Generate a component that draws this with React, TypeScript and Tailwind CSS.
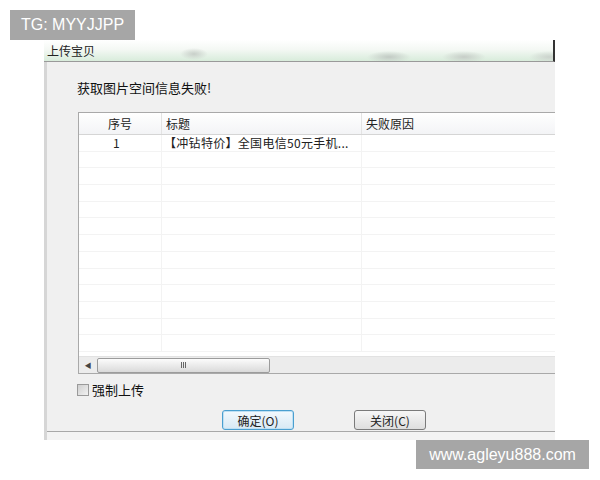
const font = { fontFamily: '"Noto Sans CJK SC", "Noto Sans", sans-serif' };

function Row({ idx, title }: { idx?: string; title?: string }) {
  return (
    <div className="flex h-[16.7px] border-b border-[#f3f3f3] text-[12px] leading-[16px] text-[#222]">
      <div className="w-[82px] shrink-0 pl-[34px]">{idx}</div>
      <div className="w-[200px] shrink-0 border-l border-[#f3f3f3] pl-[2px] whitespace-nowrap tracking-[0.3px]">{title}</div>
      <div className="flex-1 border-l border-[#f3f3f3]" />
    </div>
  );
}

export default function App() {
  const empty = Array.from({ length: 12 });
  return (
    <div className="relative h-[480px] w-[600px] overflow-hidden bg-white" style={font}>
      <div className="ml-[44px] mt-[40px] flex h-[400px] w-[511px] flex-col">
        {/* title bar */}
        <div className="flex h-[22px] shrink-0 items-center border-b border-r-2 border-b-[#9a9a9a] border-r-[#333] bg-[radial-gradient(ellipse_14px_6px_at_150px_14px,#c8cfc9,transparent),radial-gradient(ellipse_22px_6px_at_345px_17px,#c2cac4,transparent),radial-gradient(ellipse_22px_6px_at_420px_17px,#c6cdc7,transparent),radial-gradient(ellipse_20px_6px_at_505px_17px,#ccd3cd,transparent),linear-gradient(to_bottom,#ffffff_0%,#f4f8f4_45%,#d8ecdb_100%)] pl-[3px] text-[12px] text-[#222]">
          上传宝贝
        </div>

        {/* body */}
        <div className="flex flex-1 flex-col border-l-[3px] border-[#d6d6d6] bg-[#f0f0f0]">
          <div className="pl-[30px] pt-[16px] text-[13px] leading-[20px] text-[#111]">获取图片空间信息失败!</div>

          {/* list view */}
          <div className="ml-[31px] mt-[14px] flex h-[262px] flex-col border border-r-0 border-[#a9a9a9] bg-white">
            <div className="flex h-[22px] shrink-0 border-b border-[#d5d5d5] bg-[linear-gradient(to_bottom,#ffffff,#f3f4f6)] text-[12px] leading-[21px] text-[#222]">
              <div className="w-[82px] shrink-0 text-center">序号</div>
              <div className="w-[200px] shrink-0 border-l border-[#e3e3e3] pl-[4px]">标题</div>
              <div className="flex-1 border-l border-[#e3e3e3] pl-[4px]">失败原因</div>
            </div>
            <div className="flex-1 overflow-hidden">
              <Row idx="1" title="【冲钻特价】全国电信50元手机..." />
              {empty.map((_, i) => (
                <Row key={i} />
              ))}
            </div>
            {/* horizontal scrollbar */}
            <div className="flex h-[17px] shrink-0 items-center border-t border-[#e2e2e2] bg-[#ececec]">
              <div className="flex w-[18px] justify-center text-[7px] text-[#444]">◀</div>
              <div className="flex h-[15px] w-[173px] items-center justify-center gap-[1px] rounded-[2px] border border-[#9c9c9c] bg-[linear-gradient(to_bottom,#fbfbfb,#dadada)]">
                <span className="h-[6px] w-[1px] bg-[#666]" />
                <span className="h-[6px] w-[1px] bg-[#666]" />
                <span className="h-[6px] w-[1px] bg-[#666]" />
              </div>
            </div>
          </div>

          <label className="ml-[30px] mt-[8px] flex items-center gap-[3px] text-[13px] leading-[16px] text-[#111]">
            <span className="h-[12px] w-[12px] border border-[#9a9a9a] bg-[linear-gradient(135deg,#cfcfcf,#f2f2f2)]" />
            强制上传
          </label>

          <div className="mt-[12px] flex gap-[60px] pl-[175px]">
            <button className="h-[20px] w-[72px] rounded-[3px] border border-[#4a9fd0] bg-[linear-gradient(to_bottom,#f3f9fd,#d8e9f4)] text-[12px] leading-[17px] text-[#222] shadow-[inset_0_0_0_1px_#bfe0f3]">
              确定(O)
            </button>
            <button className="h-[20px] w-[72px] rounded-[3px] border border-[#7a7a7a] bg-[linear-gradient(to_bottom,#f6f6f6,#dedede)] text-[12px] leading-[17px] text-[#222]">
              关闭(C)
            </button>
          </div>

          <div className="mt-auto h-[9px] border-t border-[#a8a8a8] bg-[#f3f3f3]" />
        </div>
      </div>

      <div className="absolute left-[10px] top-[10px] flex h-[30px] w-[125px] items-center justify-center bg-[#a6a6a6] text-[16px] text-white" style={{ fontFamily: '"Liberation Sans", Arial, sans-serif' }}>
        TG: MYYJJPP
      </div>
      <div className="absolute left-[416px] top-[440px] flex h-[29px] w-[173px] items-center justify-center bg-[#a6a6a6] text-[16px] text-white" style={{ fontFamily: '"Liberation Sans", Arial, sans-serif' }}>
        www.agleyu888.com
      </div>
    </div>
  );
}
